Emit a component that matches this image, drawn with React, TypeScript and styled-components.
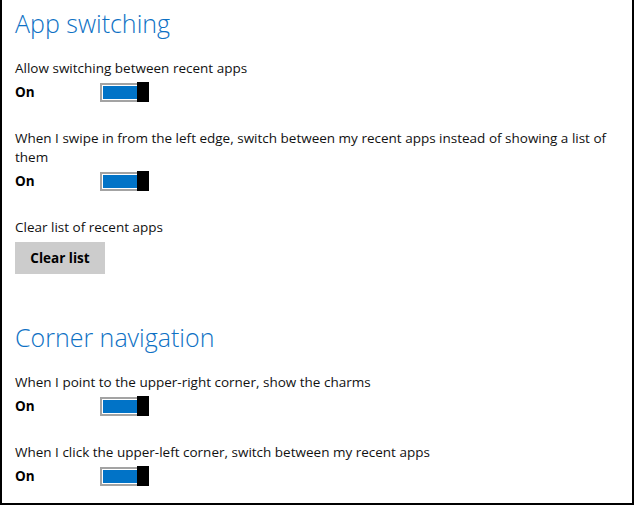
import React from "react";
import styled, { createGlobalStyle } from "styled-components";

const GlobalStyle = createGlobalStyle`
  html, body { margin: 0; padding: 0; background: #fff; }
  body { font-family: "Open Sans", "Noto Sans", sans-serif; color: #000; }
`;

const Frame = styled.div`
  box-sizing: border-box;
  width: 634px;
  height: 505px;
  border-left: 2px solid #000;
  border-right: 2px solid #000;
  border-bottom: 2px solid #000;
  padding: 6px 0 0 13px;
  overflow: hidden;
  display: flex;
  flex-direction: column;
`;

const Section = styled.section<{ $top?: number }>`
  display: flex;
  flex-direction: column;
  margin-top: ${(p) => p.$top ?? 0}px;
`;

const Heading = styled.h2`
  margin: 0 0 19px 0;
  font-family: "Open Sans", sans-serif;
  font-weight: 300;
  font-size: 25px;
  line-height: 34px;
  color: #0e71c4;
  white-space: nowrap;
`;

const Setting = styled.div<{ $first?: boolean }>`
  display: flex;
  flex-direction: column;
  margin-top: ${(p) => (p.$first ? 0 : 27)}px;
`;

const Label = styled.div`
  font-size: 13.5px;
  line-height: 19px;
  max-width: 600px;
  color: #111;
`;

const Row = styled.div`
  display: flex;
  align-items: center;
  margin-top: 4px;
  height: 20px;
`;

const State = styled.span`
  width: 85px;
  font-weight: 700;
  font-size: 13.5px;
  line-height: 20px;
`;

const Toggle = styled.div`
  display: flex;
  align-items: center;
  height: 20px;
`;

const Track = styled.div`
  box-sizing: border-box;
  width: 37px;
  height: 19px;
  border: 2px solid #a3a3a3;
  border-right: none;
  padding: 1px 0 1px 1px;
  background: #fff;
  display: flex;
`;

const Fill = styled.div`
  flex: 1;
  background: #0173c7;
`;

const Thumb = styled.div`
  width: 12px;
  height: 20px;
  background: #000;
`;

const Button = styled.button`
  margin-top: 5px;
  width: 90px;
  height: 32px;
  border: none;
  padding: 0;
  background: #cccccc;
  font-family: "Open Sans", sans-serif;
  font-weight: 700;
  font-size: 13.5px;
  color: #000;
  cursor: default;
`;

function Switch() {
  return (
    <Row>
      <State>On</State>
      <Toggle>
        <Track>
          <Fill />
        </Track>
        <Thumb />
      </Toggle>
    </Row>
  );
}

export default function App() {
  return (
    <>
      <GlobalStyle />
      <Frame>
        <Section>
          <Heading>App switching</Heading>
          <Setting $first>
            <Label>Allow switching between recent apps</Label>
            <Switch />
          </Setting>
          <Setting>
            <Label>
              When I swipe in from the left edge, switch between my recent apps instead of showing a list of them
            </Label>
            <Switch />
          </Setting>
          <Setting>
            <Label>Clear list of recent apps</Label>
            <Button>Clear list</Button>
          </Setting>
        </Section>
        <Section $top={46}>
          <Heading>Corner navigation</Heading>
          <Setting $first>
            <Label>When I point to the upper-right corner, show the charms</Label>
            <Switch />
          </Setting>
          <Setting>
            <Label>When I click the upper-left corner, switch between my recent apps</Label>
            <Switch />
          </Setting>
        </Section>
      </Frame>
    </>
  );
}
